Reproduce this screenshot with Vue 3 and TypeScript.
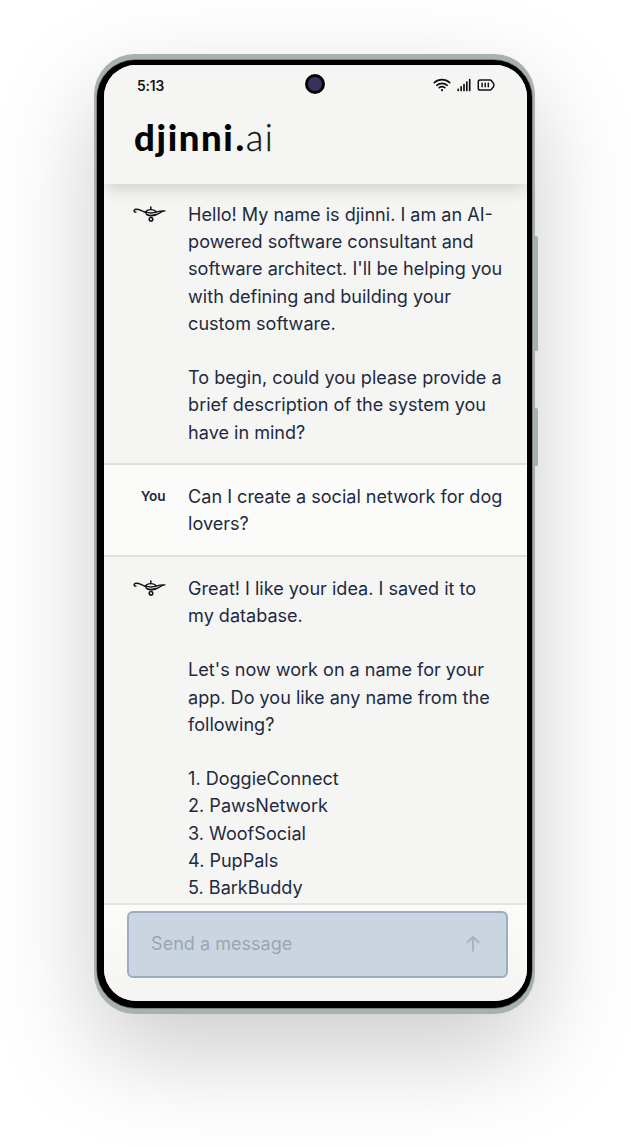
<script setup lang="ts">
interface Message {
  id: number
  author: 'djinni' | 'you'
  lines: string[]
}

const messages: Message[] = [
  {
    id: 1,
    author: 'djinni',
    lines: [
      'Hello! My name is djinni. I am an AI-',
      'powered software consultant and',
      "software architect. I'll be helping you",
      'with defining and building your',
      'custom software.',
      '',
      'To begin, could you please provide a',
      'brief description of the system you',
      'have in mind?',
    ],
  },
  { id: 2, author: 'you', lines: ['Can I create a social network for dog', 'lovers?'] },
  {
    id: 3,
    author: 'djinni',
    lines: [
      'Great! I like your idea. I saved it to',
      'my database.',
      '',
      "Let's now work on a name for your",
      'app. Do you like any name from the',
      'following?',
      '',
      '1. DoggieConnect',
      '2. PawsNetwork',
      '3. WoofSocial',
      '4. PupPals',
      '5. BarkBuddy',
    ],
  },
]
</script>

<template>
  <main class="stage">
    <div class="phone">
      <i class="side-button volume"></i>
      <i class="side-button power"></i>
      <div class="bezel">
        <div class="screen">
          <header class="header">
            <div class="status">
              <span class="time">5:13</span>
              <span class="camera"></span>
              <div class="status-icons">
                <svg width="18" height="14" viewBox="0 0 18 14" fill="none" stroke="#111" stroke-width="1.7" stroke-linecap="round">
                  <path d="M1.300 4.700C5.800.6 12.200.6 16.700 4.700" />
                  <path d="M3.800 7.300c3-2.700 7.400-2.700 10.400 0" />
                  <path d="M6.200 9.700c1.700-1.400 3.900-1.400 5.600 0" />
                  <circle cx="9" cy="12.200" r="1.100" fill="#111" stroke="none" />
                </svg>
                <svg width="14" height="14" viewBox="0 0 14 14" stroke="#111" stroke-width="1.700" stroke-linecap="round">
                  <path d="M1.200 11.300v1.200M4.100 8.800v3.700M7 6.600v5.900M9.800 4.200v8.300M12.700 1.500v11" />
                </svg>
                <svg width="18" height="14" viewBox="0 0 18 14" fill="none" stroke="#111" stroke-width="1.500" stroke-linecap="round" stroke-linejoin="round">
                  <path d="M3.200 1.900h9.900q1.300 0 1.700 1.300l1.300 1.500q.7.700.7 1.600v1.400q0 .9-.7 1.600l-1.300 1.500q-.4 1.300-1.700 1.300H3.200q-1.900 0-1.900-1.900V3.800Q1.300 1.900 3.200 1.900z" />
                  <path d="M5.100 5.200v3.600M8.200 5.200v3.600M11.300 5.200v3.600" />
                </svg>
              </div>
            </div>
            <h1 class="logo"><b>djinni<i>.</i></b><span>ai</span></h1>
          </header>

          <section class="chat">
            <article v-for="message in messages" :key="message.id" class="message" :class="message.author">
              <div class="avatar">
                <svg v-if="message.author === 'djinni'" width="34" height="18" viewBox="0 0 34 18" fill="none" stroke="#111" stroke-linecap="round" stroke-linejoin="round">
                  <path d="M3.900 7C1.700 7.600 1.200 4.500 3.900 4.300c3.700-.2 5.400 1.800 9.500 2.900" stroke-width="1.400" />
                  <path d="M13.600 7c1.600-3.300 8.800-3.300 10.600 0" stroke-width="1.300" />
                  <path d="M13.400 7.200c3.600 1 7.600 1 10.800 0 3-1.100 5.500-1.600 8.700-1.300-5 .4-6.700 5-13.400 5-3.600 0-5.700-1.400-6.100-3.700z" stroke-width="1.300" />
                  <path d="M14.600 9.400c2.700 1 6.600.9 9.200-.4-2.200 2.200-6.800 2.500-9.200.4z" fill="#111" stroke-width=".7" />
                  <path d="M18.800 4V1.900" stroke-width="1.500" />
                  <circle cx="19" cy="14.200" r="1.800" stroke-width="1.500" />
                </svg>
                <strong v-else>You</strong>
              </div>
              <p class="text">{{ message.lines.join('\n') }}</p>
            </article>
          </section>

          <footer class="composer">
            <div class="field">
              <span>Send a message</span>
              <svg width="16" height="18" viewBox="0 0 16 18" fill="none" stroke="#a8b5c3" stroke-width="2.200" stroke-linecap="round" stroke-linejoin="round">
                <path d="M8 15.700V2.200M2.400 7.300 8 1.900l5.600 5.400" />
              </svg>
            </div>
          </footer>
        </div>
      </div>
    </div>
  </main>
</template>

<style>
body {
  margin: 0;
  background: #fff;
}
</style>

<style scoped>
.stage {
  box-sizing: border-box;
  width: 631px;
  height: 1147px;
  padding: 54px 0 0 94.300px;
  overflow: hidden;
  background: #fff;
  font-family: Inter, "Liberation Sans", sans-serif;
}

.phone {
  position: relative;
  box-sizing: border-box;
  width: 441.200px;
  height: 959.700px;
  padding: 6px 3px;
  border-radius: 41px;
  background: #a9b1af;
  box-shadow: 0 38px 100px rgba(0, 0, 0, 0.205);
}

.side-button {
  position: absolute;
  right: -2.700px;
  width: 3px;
  border-radius: 0 1.500px 1.500px 0;
  background: #a9b1af;
}

.volume {
  top: 181.500px;
  height: 115px;
}

.power {
  top: 354px;
  height: 58px;
}

.bezel {
  box-sizing: border-box;
  height: 100%;
  padding: 5.300px 5.700px 6.300px 6.300px;
  border-radius: 38px;
  background: #000;
  box-shadow: 0 0 0 0.700px #6c7371;
}

.screen {
  display: flex;
  flex-direction: column;
  height: 100%;
  overflow: hidden;
  border-radius: 32px;
  background: #f5f5f3;
}

.header {
  position: relative;
  z-index: 1;
  flex: none;
  box-sizing: border-box;
  height: 118.400px;
  background: #f5f5f3;
  box-shadow: 0 6px 16px -2px rgba(0, 0, 0, 0.17);
}

.status {
  display: grid;
  grid-template-columns: 1fr 20px 1fr;
  align-items: center;
  height: 38px;
  padding: 0 31.500px 0 33.500px;
}

.time {
  padding-top: 3px;
  font-size: 13.800px;
  font-weight: 600;
  line-height: 20px;
  letter-spacing: -0.200px;
  color: #151515;
}

.camera {
  box-sizing: border-box;
  width: 20px;
  height: 20px;
  border: 3px solid #050507;
  border-radius: 50%;
  background: #38335a;
  transform: translateX(-1px);
}

.status-icons {
  display: flex;
  align-items: center;
  justify-content: flex-end;
  gap: 6px;
  padding-top: 2px;
}

.status-icons svg {
  display: block;
}

.logo {
  margin: 10px 0 0 30.500px;
  font-family: Lato, sans-serif;
  font-size: 36.500px;
  line-height: 48px;
  white-space: nowrap;
  color: #050505;
}

.logo b {
  font-weight: 900;
  letter-spacing: 1.600px;
}

.logo i {
  margin-left: 1px;
  font-style: normal;
}

.logo span {
  font-weight: 300;
  letter-spacing: 1.500px;
  color: #111;
  -webkit-text-stroke: 0.300px #111;
}

.chat {
  flex: 1;
  min-height: 0;
  overflow: hidden;
}

.message {
  display: flex;
  padding: 17.400px 0 17.400px 28px;
  border-bottom: 2px solid #e0e0de;
}

.message.you {
  padding: 18px 0 17.600px 28px;
  background: #fbfbf9;
}

.message.you + .message {
  padding-top: 17.700px;
}

.avatar {
  flex: none;
  display: flex;
  justify-content: flex-end;
  width: 34px;
  height: 27.200px;
  margin-right: 22.500px;
}

.avatar svg {
  display: block;
  margin-top: 4px;
}

.avatar strong {
  font-size: 13.600px;
  font-weight: 600;
  line-height: 27.200px;
  color: #1e293b;
}

.text {
  margin: 0;
  font-size: 18.060px;
  line-height: 27.180px;
  white-space: pre;
  color: #1e2a40;
}

.composer {
  flex: none;
  box-sizing: border-box;
  height: 98px;
  padding: 6px 19px 0 23px;
  border-top: 2px solid #e4e4e2;
  background: linear-gradient(#fbfbf9, #f4f4f2);
}

.field {
  display: flex;
  align-items: center;
  justify-content: space-between;
  box-sizing: border-box;
  height: 67px;
  padding: 0 25px 2px 22.500px;
  border: 2px solid #9cadc3;
  border-radius: 6px;
  background: #cbd5e1;
  font-size: 18.060px;
  color: #9ba5b2;
}
</style>
